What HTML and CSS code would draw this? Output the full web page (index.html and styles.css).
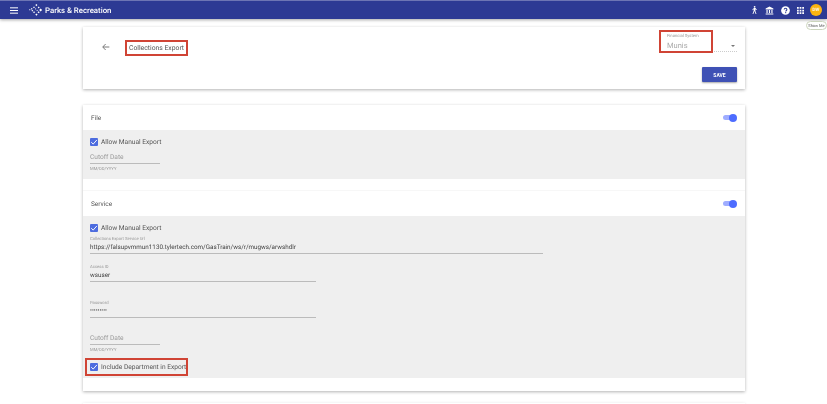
FILE: index.html
```html
<!DOCTYPE html>
<html lang="en">
<head>
<meta charset="utf-8">
<title>Collections Export</title>
<link rel="stylesheet" href="styles.css">
</head>
<body>
<header class="topbar">
  <svg class="menu-icon" viewBox="0 0 12 10" width="8" height="7"><path d="M0 1h12M0 5h12M0 9h12" stroke="#fff" stroke-width="1.500"/></svg>
  <svg class="logo" viewBox="0 0 18 16" width="14" height="12"><g fill="#fff"><rect x="8.500" y="0.500" width="2" height="2" transform="rotate(45 9.500 1.500)"/><rect x="5.500" y="3.500" width="1.800" height="1.800" transform="rotate(45 6.300 4.300)"/><rect x="2.600" y="5.600" width="1.600" height="1.600" transform="rotate(45 3.300 6.300)"/><rect x="0.200" y="7" width="1.400" height="1.400" transform="rotate(45 .8 7.600)"/><rect x="11.800" y="3.800" width="1.800" height="1.800" transform="rotate(45 12.600 4.600)"/><rect x="14" y="6.600" width="2.800" height="2.800" transform="rotate(45 15.200 7.800)"/><rect x="11.600" y="10" width="2" height="2" transform="rotate(45 12.500 10.900)"/><rect x="8.600" y="13" width="2.200" height="2.200" transform="rotate(45 9.600 14)"/><rect x="5.600" y="10" width="1.800" height="1.800" transform="rotate(45 6.400 10.800)"/><rect x="3.400" y="8" width="1.600" height="1.600" transform="rotate(45 4.100 8.700)"/><rect x="7.800" y="5.800" width="1.400" height="1.400" transform="rotate(45 8.500 6.500)"/><rect x="9.800" y="7.800" width="1.400" height="1.400" transform="rotate(45 10.500 8.500)"/></g></svg>
  <span class="brand">Parks &amp; Recreation</span>
  <div class="actions">
    <svg viewBox="0 0 12 14" width="7" height="10"><g fill="#fff"><circle cx="6.200" cy="1.600" r="1.500"/><path d="M5 3.400h2.600l2.600 3-.9.8-1.800-1.700v3l1.900 5.200H8L6 8.900 4 13.700H2.600L4.700 8V5.400L3.200 7.400 2.200 6.700z"/></g></svg>
    <svg viewBox="0 0 14 14" width="9" height="9"><path fill="#fff" d="M7 .8 13 4v1.400H1V4zM2.300 6.400h1.800v4.300H2.300zM6.100 6.400h1.800v4.300H6.100zM9.900 6.400h1.800v4.300H9.900zM1 11.700h12v1.600H1z"/></svg>
    <svg viewBox="0 0 14 14" width="9" height="9"><circle cx="7" cy="7" r="6.800" fill="#fff"/><path d="M4.900 5.500C5 4.200 6 3.600 7 3.600c1.200 0 2.200.8 2.200 1.900 0 1.500-1.800 1.500-1.800 3" fill="none" stroke="#2d3a94" stroke-width="1.600"/><rect x="6.400" y="9.500" width="1.700" height="1.700" fill="#2d3a94"/></svg>
    <svg viewBox="0 0 12 12" width="7" height="7"><path fill="#fff" d="M0 0h3v3H0zM4.500 0h3v3h-3zM9 0h3v3H9zM0 4.500h3v3H0zM4.500 4.500h3v3h-3zM9 4.500h3v3H9zM0 9h3v3H0zM4.500 9h3v3h-3zM9 9h3v3H9z"/></svg>
    <span class="avatar">DW</span>
  </div>
  <span class="tooltip">Show Me</span>
</header>

<main class="page">
  <section class="card head-card">
    <div class="head-row">
      <svg class="back" viewBox="0 0 12 12" width="8" height="8"><path d="M11 6H1.500M5.500 1.500 1 6l4.500 4.500" fill="none" stroke="#666" stroke-width="1.300"/></svg>
      <h1 class="title hl">Collections Export</h1>
      <div class="select">
        <div class="select-box hl">
          <span class="tiny">Financial System</span>
          <span class="select-value">Munis</span>
        </div>
        <span class="caret"></span>
      </div>
    </div>
    <div class="save-row"><button class="save">SAVE</button></div>
  </section>

  <section class="card form-card">
    <div class="sec-head">
      <span>File</span>
      <span class="toggle"></span>
    </div>
    <div class="sec-body file-body">
      <label class="check"><span class="box"><svg viewBox="0 0 10 10" width="8" height="8"><path d="M1.500 5.200 4 7.600 8.600 2.400" fill="none" stroke="#fff" stroke-width="1.200"/></svg></span>Allow Manual Export</label>
      <div class="date-field"><span class="placeholder">Cutoff Date</span></div>
      <span class="tiny hint">MM/DD/YYYY</span>
    </div>
    <div class="sec-gap"></div>
    <div class="sec-head service-head">
      <span>Service</span>
      <span class="toggle"></span>
    </div>
    <div class="sec-body service-body">
      <label class="check"><span class="box"><svg viewBox="0 0 10 10" width="8" height="8"><path d="M1.500 5.200 4 7.600 8.600 2.400" fill="none" stroke="#fff" stroke-width="1.200"/></svg></span>Allow Manual Export</label>
      <div class="field url-field">
        <span class="tiny">Collections Export Service Url</span>
        <span class="value">https://falsupvmmun1130.tylertech.com/GasTrain/ws/r/mugws/arwshdlr</span>
      </div>
      <div class="field access-field">
        <span class="tiny">Access ID</span>
        <span class="value">wsuser</span>
      </div>
      <div class="field password-field">
        <span class="tiny">Password</span>
        <span class="value">•••••••••</span>
      </div>
      <div class="date-field last-date"><span class="placeholder">Cutoff Date</span></div>
      <span class="tiny hint">MM/DD/YYYY</span>
      <label class="check include hl"><span class="box"><svg viewBox="0 0 10 10" width="8" height="8"><path d="M1.500 5.200 4 7.600 8.600 2.400" fill="none" stroke="#fff" stroke-width="1.200"/></svg></span>Include Department in Export</label>
    </div>
  </section>

  <section class="card next-card"></section>
</main>
</body>
</html>
```

FILE: styles.css
```css
* { box-sizing: border-box; }
html, body { margin: 0; height: 404px; overflow: hidden; }
body {
  background: #fff; color: #555; font-size: 6.5px;
  font-family: Roboto, "Liberation Sans", sans-serif;
  text-rendering: geometricPrecision;
  filter: blur(.35px);
}

.topbar {
  position: relative;
  display: flex;
  align-items: center;
  height: 19px;
  background: #2d3a94;
  border-top: 1px solid #6d75b4;
  box-shadow: 0 1px 3px rgba(0, 0, 0, .35);
  color: #fff;
}
.menu-icon { margin-left: 10px; }
.logo { margin-left: 11px; }
.brand { margin-left: 2px; font-size: 7.800px; font-weight: 500; }
.actions { display: flex; align-items: center; margin-left: auto; margin-right: 5px; gap: 7px; }
.avatar {
  width: 12px; height: 12px; margin-left: -1px; border-radius: 50%;
  background: #fbb40f; color: #fff; font-size: 4.500px; font-weight: 500;
  display: flex; align-items: center; justify-content: center;
}
.tooltip {
  position: absolute; right: 0; top: 20px; height: 9px; width: 21px;
  background: #fff; border: 1px solid #ccd5bd; border-radius: 5px;
  color: #555; font-size: 4px; line-height: 7px; text-align: center; white-space: nowrap;
}

.page { padding: 8px 82px 0 83px; }
.card { background: #fff; box-shadow: 0 1px 3px rgba(0, 0, 0, .3); }
.hl { border: 2px solid #d04435; }

.head-card { height: 62px; padding: 3px 8px 0 19px; margin-bottom: 16px; }
.head-row { display: flex; align-items: flex-start; height: 37px; }
.back { margin: 13px 0 0 0; }
.title {
  margin: 10px 0 0 15px; width: 63px; height: 16px; padding-left: 2px;
  font-size: 6.800px; font-weight: 400; line-height: 13px; color: #555; white-space: nowrap;
}
.select { position: relative; display: flex; margin-left: auto; width: 78px; height: 22px; border-bottom: 1px dotted #ccc; }
.select-box { display: flex; flex-direction: column; width: 54px; height: 23px; padding: 2px 0 0 6px; }
.select-value { margin-top: 2px; font-size: 7.500px; color: #aaa; }
.caret { position: absolute; right: 2px; top: 15px; border: 2px solid transparent; border-top: 2.500px solid #777; border-bottom: 0; }
.save-row { display: flex; justify-content: flex-end; }
.save {
  width: 35px; height: 15px; padding: 0; border: 0; border-radius: 1px;
  background: #3f51b5; color: #fff; font: 700 5px Roboto, sans-serif;
  box-shadow: 0 1px 2px rgba(0, 0, 0, .35);
}

.form-card { height: 286px; margin-bottom: 12px; }
.sec-head { display: flex; align-items: center; justify-content: space-between; height: 25px; padding: 0 9px 0 8px; color: #555; }
.service-head { height: 26px; border-top: 1px solid #f7f7f7; }
.sec-gap { height: 11px; }
.toggle { position: relative; width: 13px; height: 5px; border-radius: 3px; background: #9fadff; }
.toggle::after { content: ""; position: absolute; right: -1px; top: -1.500px; width: 8px; height: 8px; border-radius: 50%; background: #4d6cff; }
.sec-body { background: #efefef; padding: 0 7px; display: flex; flex-direction: column; align-items: flex-start; }
.file-body { height: 49px; padding-top: 7px; }
.service-body { height: 162px; padding-top: 7px; }

.check { display: flex; align-items: center; height: 10px; font-size: 6.600px; color: #555; white-space: nowrap; }
.box { display: flex; align-items: center; justify-content: center; width: 8px; height: 8px; margin-right: 3px; background: #4d6cdf; border-radius: 1px; }
.tiny { display: block; font-size: 4.200px; line-height: 5px; color: #999; white-space: nowrap; }
.hint { margin-top: 3px; }
.date-field { width: 70px; height: 13px; margin-top: 4px; border-bottom: 1px solid #bbb; }
.placeholder { display: block; font-size: 6.600px; line-height: 12px; color: #999; }
.last-date { margin-top: 15px; height: 12px; }
.last-date .placeholder { line-height: 10px; }

.field { display: flex; flex-direction: column; border-bottom: 1px solid #bbb; }
.value { font-size: 6.300px; line-height: 10px; color: #444; white-space: nowrap; }
.password-field .value { font-size: 5.600px; }
.url-field { width: 453px; height: 17px; margin-top: 4px; }
.access-field { width: 226px; height: 17px; margin-top: 11px; }
.password-field { width: 226px; height: 17px; margin-top: 19px; }
.include { margin: 5px 0 0 -5px; width: 103px; height: 18px; padding-left: 3px; }
.next-card { height: 1px; }
```
